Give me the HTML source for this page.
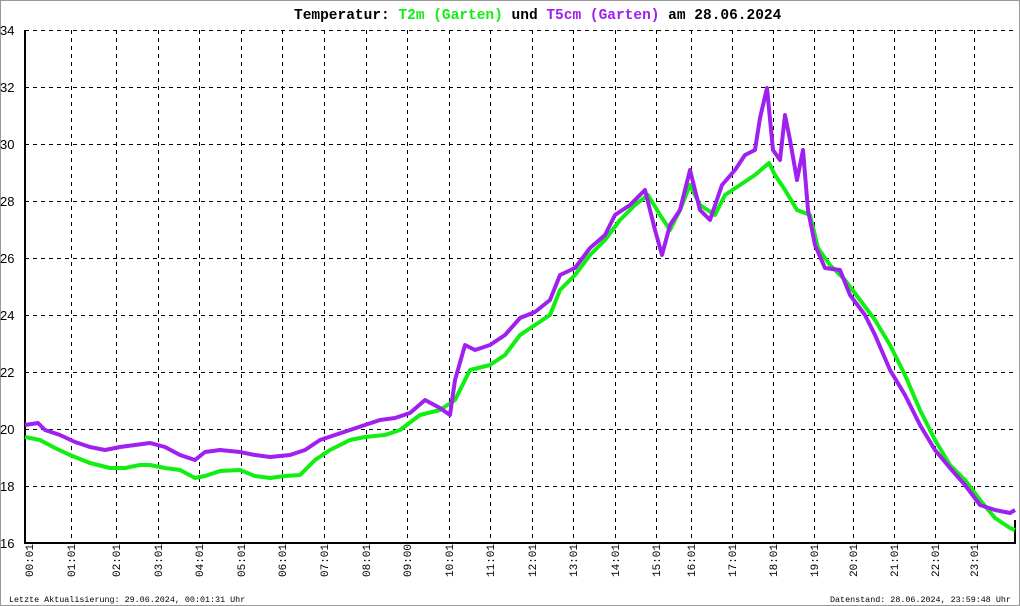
<!DOCTYPE html>
<html><head><meta charset="utf-8"><style>
html,body{margin:0;padding:0;background:#fff}
svg{display:block}
</style></head><body>
<svg width="1020" height="606" xmlns="http://www.w3.org/2000/svg">
<rect x="0.5" y="0.5" width="1019" height="605" fill="#fff" stroke="#999"/>
<g stroke="#000" stroke-width="1" stroke-dasharray="4,4">
<line x1="25" y1="30.5" x2="1015" y2="30.5"/>
<line x1="25" y1="87.5" x2="1015" y2="87.5"/>
<line x1="25" y1="144.5" x2="1015" y2="144.5"/>
<line x1="25" y1="201.5" x2="1015" y2="201.5"/>
<line x1="25" y1="258.5" x2="1015" y2="258.5"/>
<line x1="25" y1="315.5" x2="1015" y2="315.5"/>
<line x1="25" y1="372.5" x2="1015" y2="372.5"/>
<line x1="25" y1="429.5" x2="1015" y2="429.5"/>
<line x1="25" y1="486.5" x2="1015" y2="486.5"/>
<line x1="71.5" y1="30" x2="71.5" y2="543"/>
<line x1="116.5" y1="30" x2="116.5" y2="543"/>
<line x1="158.5" y1="30" x2="158.5" y2="543"/>
<line x1="199.5" y1="30" x2="199.5" y2="543"/>
<line x1="241.5" y1="30" x2="241.5" y2="543"/>
<line x1="282.5" y1="30" x2="282.5" y2="543"/>
<line x1="324.5" y1="30" x2="324.5" y2="543"/>
<line x1="366.5" y1="30" x2="366.5" y2="543"/>
<line x1="407.5" y1="30" x2="407.5" y2="543"/>
<line x1="449.5" y1="30" x2="449.5" y2="543"/>
<line x1="490.5" y1="30" x2="490.5" y2="543"/>
<line x1="532.5" y1="30" x2="532.5" y2="543"/>
<line x1="573.5" y1="30" x2="573.5" y2="543"/>
<line x1="615.5" y1="30" x2="615.5" y2="543"/>
<line x1="656.5" y1="30" x2="656.5" y2="543"/>
<line x1="691.5" y1="30" x2="691.5" y2="543"/>
<line x1="732.5" y1="30" x2="732.5" y2="543"/>
<line x1="773.5" y1="30" x2="773.5" y2="543"/>
<line x1="814.5" y1="30" x2="814.5" y2="543"/>
<line x1="853.5" y1="30" x2="853.5" y2="543"/>
<line x1="894.5" y1="30" x2="894.5" y2="543"/>
<line x1="935.5" y1="30" x2="935.5" y2="543"/>
<line x1="974.5" y1="30" x2="974.5" y2="543"/>
</g>
<g stroke="#000" stroke-width="2" fill="none">
<line x1="25" y1="30" x2="25" y2="544"/>
<line x1="24" y1="543" x2="1016" y2="543"/>
<line x1="1015" y1="543" x2="1015" y2="520"/>
</g>
<g font-family="Liberation Sans, sans-serif" font-size="13" fill="#000">
<text x="0" y="35">34</text><text x="0" y="92">32</text><text x="0" y="149">30</text>
<text x="0" y="206">28</text><text x="0" y="263">26</text><text x="0" y="320">24</text>
<text x="0" y="377">22</text><text x="0" y="434">20</text><text x="0" y="491">18</text>
<text x="0" y="548">16</text>
</g>
<polyline fill="none" stroke="#11ee11" stroke-width="4" stroke-linejoin="round" points="25,437 40,440 55,448 70,455 90,463 110,468 125,468 140,465 150,465 165,468 180,470 195,478 205,476 220,471 240,470 255,476 270,478 285,476 300,475 315,460 330,450 350,440 365,437 385,435 400,430 420,415 440,410 455,400 470,370 490,365 505,355 520,335 535,325 550,315 560,290 575,275 590,255 605,240 620,220 635,205 648,195 660,215 670,230 680,210 690,185 700,205 715,215 725,195 740,185 755,175 769,163 775,175 785,190 797,210 810,215 818,248 830,265 845,280 860,300 875,320 890,345 905,375 920,410 935,440 950,465 965,480 980,500 995,518 1010,528 1015,530"/>
<polyline fill="none" stroke="#a020f0" stroke-width="4" stroke-linejoin="round" points="25,425 38,423 45,430 60,435 75,442 90,447 105,450 120,447 135,445 150,443 165,447 180,455 195,460 205,452 220,450 240,452 255,455 270,457 290,455 305,450 320,440 335,435 350,430 365,425 380,420 395,418 410,413 425,400 440,408 450,415 455,380 465,345 475,350 490,345 505,335 520,318 535,312 550,300 560,275 575,268 590,248 605,235 615,215 630,205 645,190 650,210 655,230 662,255 670,225 680,210 690,170 700,210 710,220 722,185 735,170 745,155 755,150 760,118 767,88 773,150 780,160 785,115 790,140 797,180 803,150 808,210 815,245 825,268 840,270 850,295 865,315 875,335 890,370 905,395 920,425 935,450 950,468 965,485 980,505 995,510 1010,513 1015,510"/>
<g font-family="Liberation Mono, monospace" font-size="11" fill="#000">
<text transform="translate(33,577) rotate(-90)">00:01</text>
<text transform="translate(75,577) rotate(-90)">01:01</text>
<text transform="translate(120,577) rotate(-90)">02:01</text>
<text transform="translate(162,577) rotate(-90)">03:01</text>
<text transform="translate(203,577) rotate(-90)">04:01</text>
<text transform="translate(245,577) rotate(-90)">05:01</text>
<text transform="translate(286,577) rotate(-90)">06:01</text>
<text transform="translate(328,577) rotate(-90)">07:01</text>
<text transform="translate(370,577) rotate(-90)">08:01</text>
<text transform="translate(411,577) rotate(-90)">09:00</text>
<text transform="translate(453,577) rotate(-90)">10:01</text>
<text transform="translate(494,577) rotate(-90)">11:01</text>
<text transform="translate(536,577) rotate(-90)">12:01</text>
<text transform="translate(577,577) rotate(-90)">13:01</text>
<text transform="translate(619,577) rotate(-90)">14:01</text>
<text transform="translate(660,577) rotate(-90)">15:01</text>
<text transform="translate(695,577) rotate(-90)">16:01</text>
<text transform="translate(736,577) rotate(-90)">17:01</text>
<text transform="translate(777,577) rotate(-90)">18:01</text>
<text transform="translate(818,577) rotate(-90)">19:01</text>
<text transform="translate(857,577) rotate(-90)">20:01</text>
<text transform="translate(898,577) rotate(-90)">21:01</text>
<text transform="translate(939,577) rotate(-90)">22:01</text>
<text transform="translate(978,577) rotate(-90)">23:01</text>
</g>
<g font-family="Liberation Mono, monospace" font-size="8.4" fill="#000">
<text x="9" y="602">Letzte Aktualisierung: 29.06.2024, 00:01:31 Uhr</text>
<text x="830" y="602">Datenstand: 28.06.2024, 23:59:48 Uhr</text>
</g>
<text x="294" y="19" font-family="Liberation Mono, monospace" font-size="14.5" font-weight="bold" fill="#000">Temperatur: <tspan fill="#11ee11">T2m (Garten)</tspan> und <tspan fill="#a020f0">T5cm (Garten)</tspan> am 28.06.2024</text>
</svg>
</body></html>
